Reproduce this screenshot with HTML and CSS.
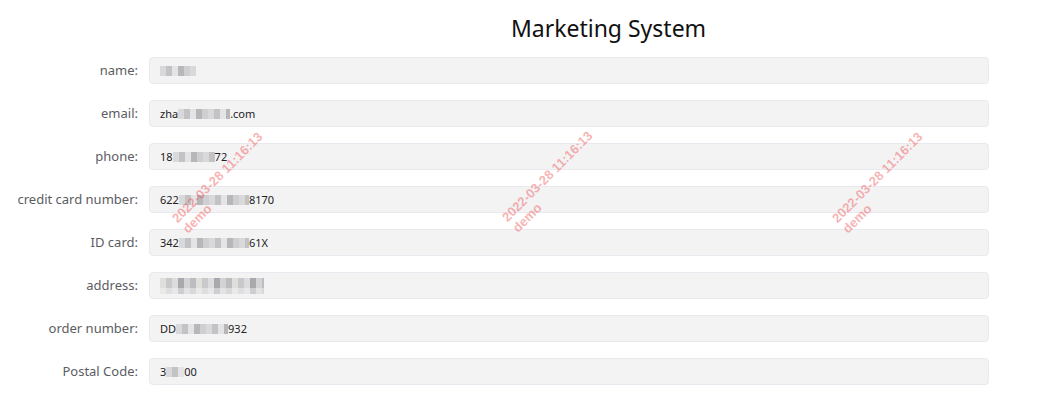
FILE: index.html
```html
<!DOCTYPE html>
<html lang="en">
<head>
    <meta charset="UTF-8">
    <title>Marketing System</title>
    <link rel="stylesheet" href="styles.css">
</head>
<body>
    <div class="page">
        <h1 class="title">Marketing System</h1>

        <div class="form">
            <label class="label">name:</label>
            <div class="field"><span class="blur w36"></span></div>

            <label class="label">email:</label>
            <div class="field">zha<span class="blur w52"></span>.com</div>

            <label class="label">phone:</label>
            <div class="field">18<span class="blur w42"></span>72</div>

            <label class="label">credit card number:</label>
            <div class="field">622<span class="blur w70"></span>8170</div>

            <label class="label">ID card:</label>
            <div class="field">342<span class="blur w70"></span>61X</div>

            <label class="label">address:</label>
            <div class="field"><span class="blur w104 tall"></span></div>

            <label class="label">order number:</label>
            <div class="field">DD<span class="blur w52"></span>932</div>

            <label class="label">Postal Code:</label>
            <div class="field">3<span class="blur w18"></span>00</div>
        </div>

        <!-- watermark overlay -->
        <div class="watermark wm-1">2022-03-28 11:16:13<br>demo</div>
        <div class="watermark wm-2">2022-03-28 11:16:13<br>demo</div>
        <div class="watermark wm-3">2022-03-28 11:16:13<br>demo</div>
    </div>
</body>
</html>
```

FILE: styles.css
```css
body {
    margin: 0;
    font-family: "Noto Sans", "Open Sans", sans-serif;
    color: #333;
    background: #fff;
}

.page {
    position: relative;
    width: 1047px;
    height: 413px;
    overflow: hidden;
}

.title {
    margin: 0;
    padding: 12px 0 0 170px;
    height: 57px;
    box-sizing: border-box;
    text-align: center;
    font-size: 23px;
    font-weight: normal;
    line-height: 32px;
    color: #111;
}

.form {
    display: grid;
    grid-template-columns: 138px 840px;
    column-gap: 11px;
    row-gap: 16px;
}

.label {
    font-size: 13px;
    line-height: 27px;
    color: #5b5d61;
    text-align: right;
    white-space: nowrap;
}

.field {
    height: 27px;
    box-sizing: border-box;
    padding: 0 10px;
    background: #f3f3f4;
    border: 1px solid #e9e9ef;
    border-radius: 4px;
    font-size: 11px;
    line-height: 25px;
    color: #222;
    display: flex;
    align-items: center;
}

/* pixelated, blurred value */
.blur {
    display: inline-block;
    height: 10px;
    background:
        repeating-linear-gradient(90deg,
            #d9d9db 0 6px, #c3c3c6 6px 12px, #e4e4e6 12px 18px,
            #b7b7ba 18px 24px, #cfcfd2 24px 30px);
}

.blur.tall {
    height: 16px;
    background:
        linear-gradient(180deg, rgba(255,255,255,0) 0 60%, rgba(243,243,244,0.5) 60%),
        repeating-linear-gradient(90deg,
            #e0dfdc 0 6px, #c9c9cc 6px 12px, #dcdcdf 12px 18px,
            #a9a9ad 18px 24px, #d3d3d6 24px 30px, #bdbdc0 30px 36px);
}

.w18 { width: 18px; }
.w36 { width: 36px; }
.w42 { width: 42px; }
.w52 { width: 52px; }
.w70 { width: 70px; }
.w104 { width: 104px; }

.watermark {
    position: absolute;
    font-family: "Liberation Sans", Arial, sans-serif;
    font-size: 13px;
    font-weight: bold;
    line-height: 15px;
    color: rgba(238, 70, 70, 0.42);
    white-space: nowrap;
    transform: rotate(-45deg);
    transform-origin: 0 0;
    pointer-events: none;
}

.wm-1 { left: 169px; top: 215px; }
.wm-2 { left: 499px; top: 214px; }
.wm-3 { left: 829px; top: 215px; }
```
